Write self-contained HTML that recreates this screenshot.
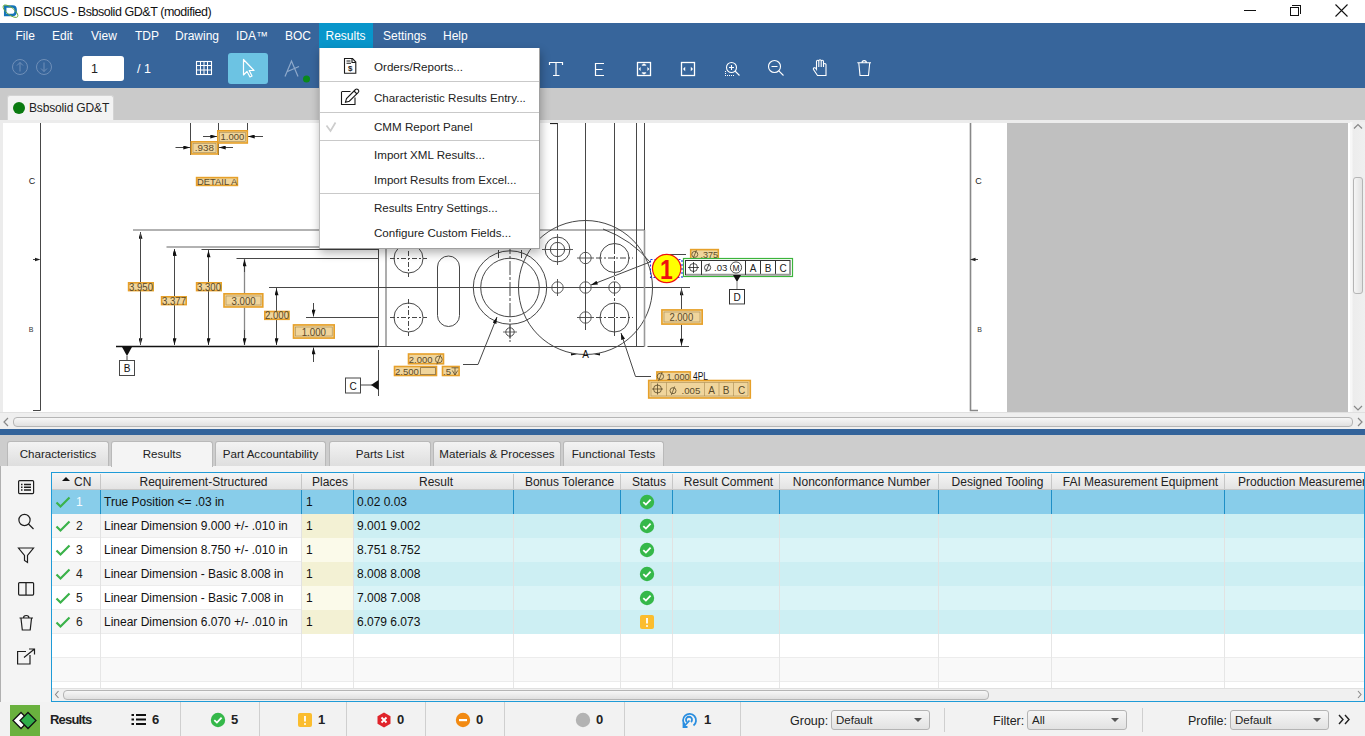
<!DOCTYPE html>
<html><head><meta charset="utf-8">
<style>
*{margin:0;padding:0;box-sizing:border-box}
html,body{width:1365px;height:736px;overflow:hidden;background:#fff;font-family:"Liberation Sans",sans-serif;color:#000}
.a{position:absolute}
.t{position:absolute;white-space:nowrap;line-height:1}
.mi{position:absolute;top:30px;color:#fff;font-size:12px;white-space:nowrap;line-height:1}
.tab{position:absolute;top:441px;height:25px;border:1px solid #b9b9b9;border-bottom:none;border-radius:3px 3px 0 0;background:linear-gradient(#f3f3f3,#dedede);font-size:11.6px;color:#222;text-align:center;line-height:24px;white-space:nowrap}
.row{position:absolute;left:52px;width:1313px;height:24px}
.c{position:absolute;top:0;height:24px;font-size:12px;line-height:24px;white-space:nowrap;color:#111}
.hd{position:absolute;top:474px;height:16px;font-size:12px;line-height:16px;text-align:center;color:#222;white-space:nowrap;border-right:1px solid #c6c6c6;padding-left:5px}
.sep{position:absolute;top:702px;width:1px;height:34px;background:#cfcfcf}
.sn{position:absolute;top:712px;font-size:13px;font-weight:bold;color:#222;line-height:1}
.dd{position:absolute;top:710px;height:19.5px;border:1px solid #b4b4b4;border-radius:3px;background:linear-gradient(#f6f6f6,#e2e2e2);font-size:11.5px;line-height:18px;padding-left:4px;color:#222}
.dd:after{content:"";position:absolute;right:7px;top:7px;border-left:4px solid transparent;border-right:4px solid transparent;border-top:4px solid #555}
.ml{position:absolute;left:374px;font-size:11.6px;color:#222;white-space:nowrap;line-height:1}
.msep{position:absolute;left:320px;width:219px;height:1px;background:#c9c9c9}
</style></head><body>

<!-- TITLE BAR -->
<svg class="a" style="left:0;top:0" width="22" height="22" viewBox="0 0 22 22">
<path d="M5.2 6.5H12.5Q15.6 6.5 15.6 9.6V12Q15.6 14.9 12.5 14.9H5.2Z" fill="none" stroke="#1474b8" stroke-width="2.5"/>
<ellipse cx="10.5" cy="11.2" rx="9" ry="3.6" transform="rotate(38 10.5 11.2)" fill="none" stroke="#6aa83a" stroke-width="0.9"/>
</svg>
<div class="t" style="left:23.5px;top:6px;font-size:12.5px;color:#111;letter-spacing:-0.45px">DISCUS - Bsbsolid GD&amp;T (modified)</div>
<div class="a" style="left:1244px;top:10px;width:12px;height:1px;background:#111"></div>
<div class="a" style="left:1290px;top:7px;width:9px;height:9px;border:1px solid #111"></div>
<div class="a" style="left:1292px;top:5px;width:9px;height:9px;border-top:1px solid #111;border-right:1px solid #111"></div>
<svg class="a" style="left:1335px;top:4px" width="13" height="13" viewBox="0 0 13 13"><path d="M0.5 0.5L12.5 12.5M12.5 0.5L0.5 12.5" stroke="#111" stroke-width="1.1"/></svg>

<!-- MENU + TOOLBAR -->
<div class="a" style="left:0;top:23px;width:1365px;height:65px;background:#37659b"></div>
<div class="a" style="left:319px;top:23px;width:54px;height:25px;background:#0896cb"></div>
<div class="mi" style="left:15.5px">File</div>
<div class="mi" style="left:52px">Edit</div>
<div class="mi" style="left:91px">View</div>
<div class="mi" style="left:135px">TDP</div>
<div class="mi" style="left:175px">Drawing</div>
<div class="mi" style="left:236px">IDA™</div>
<div class="mi" style="left:285px">BOC</div>
<div class="mi" style="left:325.5px">Results</div>
<div class="mi" style="left:383px">Settings</div>
<div class="mi" style="left:443px">Help</div>

<svg class="a" style="left:0;top:48px" width="1365" height="40" viewBox="0 48 1365 40">
<g fill="none" stroke="#6f8fb8" stroke-width="1">
<circle cx="20" cy="67" r="7.5"/><path d="M20 71.5V62.5M17 65.5L20 62.5L23 65.5"/>
<circle cx="44" cy="67" r="7.5"/><path d="M44 62.5V71.5M41 68.5L44 71.5L47 68.5"/>
</g>
<rect x="82" y="56" width="42" height="25" rx="3" fill="#fff"/>
<text x="91" y="72.6" font-size="12.5" fill="#222" font-family="Liberation Sans">1</text>
<text x="137" y="72.6" font-size="12.5" fill="#fff" font-family="Liberation Sans">/ 1</text>
<g fill="none" stroke="#fff" stroke-width="1.3">
<rect x="196.5" y="61.5" width="15" height="13" stroke-width="1.1"/><path d="M196.5 65.5H211.5M196.5 70H211.5M200.5 61.5V74.5M204 61.5V74.5M207.5 61.5V74.5" stroke-width="1"/>
</g>
<rect x="228" y="53" width="40" height="31" rx="3" fill="#6cc3e3"/>
<path d="M243.5 59.5L243.5 75L247 71.5L250 77L252 76L249.2 70.5L254 70.5Z" fill="#6cc3e3" stroke="#fff" stroke-width="1.2" stroke-linejoin="round"/>
<path d="M285 76.5L291.5 61L298 76.5M287.5 71.5L299 66.5" fill="none" stroke="#8ea9cb" stroke-width="1.2"/>
<circle cx="306.5" cy="79" r="3.5" fill="#0a8a1a"/>
<g fill="none" stroke="#fff" stroke-width="1.3">
<path d="M549.5 65V62.5H562.5V65M556 62.5V75.5M553 75.5H559.5" stroke-width="1.2"/>
<path d="M604 63.5H595.5V75.5H604M595.5 69.5H602.5" stroke-width="1.2"/>
<rect x="637.5" y="62.5" width="13" height="13"/>
<rect x="681.5" y="62.5" width="13" height="13"/>
<circle cx="731.5" cy="67.5" r="5" stroke-width="1.1"/><path d="M735 71L739.5 75.5M729 67.5H734M731.5 65V70" stroke-width="1.1"/>
<path d="M725 75.5H735M725.5 71V75" stroke-dasharray="1 1" stroke-width="1"/>
<circle cx="774.5" cy="66.5" r="6" stroke-width="1.1"/><path d="M778.8 70.8L783.5 75.5M771.5 66.5H777.5" stroke-width="1.1"/>
<path d="M817.5 75.5L813.5 69.5Q813 68.2 814.2 67.8Q815.2 67.5 816 68.5L816.5 69.3V61.5Q816.5 60.3 817.7 60.3Q818.8 60.3 818.8 61.5V67V60.8Q818.8 59.8 820 59.8Q821.2 59.8 821.2 60.8V67V61.5Q821.2 60.3 822.3 60.3Q823.5 60.3 823.5 61.5V67V64.5Q823.5 63.5 824.8 63.5Q826 63.5 826 64.5V75.5Z" stroke-width="1.1"/>
<path d="M857.3 62.8H871M858.8 63L860 75.5H868.5L869.7 63M862 62.8Q862 60.6 864.2 60.6Q866.4 60.6 866.4 62.8" stroke-width="1.1"/>
</g>
<g fill="#fff">
<path d="M644 63.2L642 65.2H646ZM644 74.8L642 72.8H646ZM638.6 69L640.6 67V71ZM649.4 69L647.4 67V71Z"/><rect x="641.8" y="64.6" width="4.4" height="1"/><rect x="641.8" y="72.4" width="4.4" height="1"/>
<path d="M683 69L685.2 66.8V71.2ZM693 69L690.8 66.8V71.2Z"/>
</g>
</svg>

<!-- DOC TAB STRIP -->
<div class="a" style="left:0;top:88px;width:1365px;height:32px;background:#cacaca"></div>
<div class="a" style="left:6.5px;top:94.5px;width:107.5px;height:26px;background:#f3f3f3;border:1px solid #d4d4d4;border-bottom:none;border-radius:3px 3px 0 0"></div>
<div class="a" style="left:13px;top:101.5px;width:12px;height:12px;border-radius:50%;background:#0a7a10"></div>
<div class="t" style="left:29px;top:102px;font-size:12px;color:#222;letter-spacing:-0.15px">Bsbsolid GD&amp;T</div>
<div class="a" style="left:0;top:120px;width:1365px;height:3px;background:#ececec"></div>

<!-- DRAWING AREA -->
<div class="a" style="left:0;top:123px;width:1350px;height:289px;background:#fff;border-left:3px solid #ececec"></div>
<div class="a" style="left:1007px;top:123px;width:341px;height:289px;background:#c0c0c0"></div>
<svg class="a" style="left:3px;top:123px" width="1004" height="289" viewBox="3 123 1004 289" font-family="Liberation Sans">
<defs>
<marker id="ar" viewBox="0 0 10 6" refX="10" refY="3" markerWidth="9" markerHeight="4" orient="auto-start-reverse" markerUnits="userSpaceOnUse"><path d="M0 0L10 3L0 6Z" fill="#111"/></marker>
</defs>
<g stroke="#474747" stroke-width="1" fill="none">
<!-- frame -->
<path d="M40.5 122V410.5H33"/><path d="M33 259.5H36"/><path d="M35 257.8L40.5 259.5L35 261.2Z" fill="#222" stroke="none"/>
<path d="M970.5 122V410.5H978" stroke="#888" stroke-width="1.6"/><path d="M974 259.5H978"/><path d="M975.5 257.8L970 259.5L975.5 261.2Z" fill="#222" stroke="none"/>
<!-- detail A dims -->
<path d="M190.5 122V155M218.5 122V155M247.5 122V131"/>
<path d="M203 136.5H217" marker-end="url(#ar)"/><path d="M263 136.5H248" marker-end="url(#ar)"/>
<path d="M175.5 147.5H190" marker-end="url(#ar)"/><path d="M233 147.5H219" marker-end="url(#ar)"/>
<!-- ext lines -->
<path d="M133 230H644.5M166.5 247H380" stroke="#999" stroke-width="1.6"/>
<path d="M201.5 249.5H378M236.5 258.5H378M269 287.5H378M306 317.5H378"/>
<path d="M116 346.5H378" stroke="#111" stroke-width="1.4"/>
<!-- vertical dims -->
<path d="M140.5 245V232" marker-end="url(#ar)"/><path d="M140.5 330V345" marker-end="url(#ar)"/>
<path d="M140.5 232V282M140.5 291V345"/>
<path d="M174.5 250V249" marker-end="url(#ar)"/><path d="M174.5 249V296M174.5 305V345"/><path d="M174.5 330V345" marker-end="url(#ar)"/><path d="M174.5 262V249" marker-end="url(#ar)"/>
<path d="M208.5 249.5V282M208.5 291V345"/><path d="M208.5 262V250.5" marker-end="url(#ar)"/><path d="M208.5 330V345" marker-end="url(#ar)"/>
<path d="M244.5 259V293M244.5 307.5V345" stroke="#888" stroke-width="1.3"/><path d="M244.5 272V259.5" marker-end="url(#ar)"/><path d="M244.5 330V345" marker-end="url(#ar)"/>
<path d="M276.5 288V311M276.5 319.5V345"/><path d="M276.5 300V288.5" marker-end="url(#ar)"/><path d="M276.5 330V345" marker-end="url(#ar)"/>
<path d="M313.5 303V316.5" marker-end="url(#ar)"/><path d="M313.5 362V347.5" marker-end="url(#ar)"/>
<!-- datum B -->
<path d="M127 356V360"/>
<rect x="119.5" y="360.5" width="15" height="15"/>
<!-- datum C -->
<path d="M378.5 350V396M361 385H372"/>
<rect x="345.5" y="378" width="15" height="15"/>
<!-- left part of part -->
<path d="M378.5 249V346.5"/>
<path d="M386 249V346.5" stroke="#999" stroke-width="1.6"/>
<path d="M370 287.5H690"/>
<path d="M378 346.5H644.5"/>
<circle cx="408.5" cy="258.5" r="14.5"/><circle cx="408.5" cy="317.5" r="14.5"/>
<path d="M390 258.5H427M408.5 240V277M390 317.5H427M408.5 299V336" stroke-dasharray="5 2 2 2"/>
<rect x="437.5" y="256" width="22" height="70.5" rx="11"/>
<circle cx="510" cy="287.5" r="36.7"/><circle cx="510" cy="287.5" r="29.3"/>
<path d="M510 240V342" stroke="#444" stroke-dasharray="14 2 3 2"/>
<circle cx="510" cy="332" r="4.2"/><path d="M503 332H517M510 325V339" stroke-width="0.8"/>
<path d="M498.5 250V258M521.5 250V258"/>
<circle cx="585.5" cy="287.5" r="67"/>
<path d="M557.5 122V230M585.5 122V330M614.5 122V240M636.5 122V346.5M644.5 122V230" />
<path d="M614.5 122V240M614.5 240V336" stroke-dasharray="14 2 3 2"/>
<path d="M644.5 230V346.5" stroke="#999" stroke-width="1.6"/>
<circle cx="557.5" cy="249.5" r="12.4"/><circle cx="557.5" cy="249.5" r="7.1"/>
<path d="M542 249.5H573M557.5 234V265" stroke-width="0.9"/>
<g stroke-width="0.9">
<circle cx="585.5" cy="258" r="5.7"/><circle cx="585.5" cy="287.5" r="5.7"/><circle cx="585.5" cy="317.5" r="5.7"/>
<circle cx="557.5" cy="287.5" r="5.7"/><circle cx="614.5" cy="287.5" r="5.7"/>
<path d="M577 258H594M577 317.5H594M549 287.5H566M606 287.5H623M557.5 279V296M585.5 309V326"/>
</g>
<circle cx="614.5" cy="258" r="14.5"/><circle cx="614.5" cy="317.5" r="14.5"/>
<path d="M596 258H633M596 317.5H633M614.5 310V336" stroke-dasharray="6 2 2 2"/>
<!-- 2.000 right dim -->
<path d="M647.5 346.5H689"/>
<path d="M681.5 300V288.5" marker-end="url(#ar)"/><path d="M681.5 288.5V309.5M681.5 324.5V345.5"/><path d="M681.5 333V345.5" marker-end="url(#ar)"/>
<!-- A arcs -->
<path d="M571 353.2L577 354.3L571 355.4Z" fill="#111" stroke="none"/><path d="M600 353.2L594 354.3L600 355.4Z" fill="#111" stroke="none"/>
<!-- leaders -->
<path d="M463 364.5H478L497 317" marker-end="url(#ar)"/>
<path d="M651 376.5H635.5L621 333" marker-end="url(#ar)"/>
<path d="M650 262L591 285" marker-end="url(#ar)"/>
<path d="M670 254.5H686"/>
</g>
<text x="585.5" y="358" font-size="10" fill="#111" text-anchor="middle">A</text>
<text x="32" y="184" font-size="9" fill="#222" text-anchor="middle">C</text>
<text x="31" y="331.5" font-size="7" fill="#333" text-anchor="middle">B</text>
<text x="978.5" y="184" font-size="9" fill="#222" text-anchor="middle">C</text>
<text x="979.5" y="331.5" font-size="7" fill="#333" text-anchor="middle">B</text>
<path d="M122 347H132L127 356Z" fill="#111"/>
<text x="127" y="372" font-size="10" fill="#111" text-anchor="middle">B</text>
<path d="M371 385L378.5 380V390Z" fill="#111"/>
<text x="353" y="389.5" font-size="10" fill="#111" text-anchor="middle">C</text>
<!-- orange labels -->
<g font-size="10" fill="#5a4a2a">
<g stroke="#e6a02a" stroke-width="1.6" fill="#f0d59c">
<rect x="217.8" y="130.8" width="29.5" height="12.2"/>
<rect x="191.3" y="141.8" width="26.5" height="12.2"/>
<rect x="196.6" y="177.6" width="40.8" height="7.8"/>
<rect x="128.6" y="282.8" width="24.6" height="7.8"/>
<rect x="161.6" y="296.8" width="24.6" height="7.8"/>
<rect x="196.6" y="282.8" width="24.6" height="7.8"/>
<rect x="224" y="293.8" width="38.8" height="13.2"/>
<rect x="264.8" y="311.5" width="24.2" height="7.8"/>
<rect x="293.5" y="324.9" width="40.7" height="13.2"/>
<rect x="661.9" y="309.9" width="40.3" height="14.2"/>
<rect x="408.5" y="354" width="35" height="9.8"/>
<rect x="394.5" y="366.5" width="42" height="9"/>
<rect x="442.5" y="366.5" width="16.6" height="9"/>
<rect x="690.7" y="249.6" width="27.6" height="10.4"/>
<rect x="656.9" y="371.9" width="33.4" height="10.1"/>
<rect x="648.7" y="380.5" width="101.6" height="17.5"/>
</g>
<g stroke="#a88a50" stroke-width="0.6" fill="none">
<rect x="219.5" y="132.5" width="26" height="9"/>
<rect x="193" y="143.5" width="23" height="9"/>
<rect x="226" y="296" width="35" height="9"/>
<rect x="295.5" y="327" width="36.7" height="9"/>
<rect x="664" y="312" width="36" height="10"/>
<rect x="651" y="382.5" width="97" height="13.5"/>
<path d="M666.5 382.5V396M704.5 382.5V396M719 382.5V396M733.5 382.5V396"/>
</g>
<text x="220.5" y="139.6" font-size="9" textLength="23.7" lengthAdjust="spacingAndGlyphs">1.000</text>
<text x="194.8" y="151.3" font-size="9" textLength="19.2" lengthAdjust="spacingAndGlyphs">.938</text>
<text x="197" y="185.1" font-size="9" textLength="40.2" lengthAdjust="spacingAndGlyphs">DETAIL A</text>
<text x="129" y="290.6" font-size="11" textLength="24" lengthAdjust="spacingAndGlyphs">3.950</text>
<text x="162" y="304.6" font-size="11" textLength="24" lengthAdjust="spacingAndGlyphs">3.377</text>
<text x="197" y="290.6" font-size="11" textLength="24" lengthAdjust="spacingAndGlyphs">3.300</text>
<text x="231.5" y="304.5" font-size="10.5" textLength="24.2" lengthAdjust="spacingAndGlyphs">3.000</text>
<text x="265" y="319.4" font-size="11" textLength="24" lengthAdjust="spacingAndGlyphs">2.000</text>
<text x="301.7" y="335.6" font-size="10.5" textLength="24.3" lengthAdjust="spacingAndGlyphs">1.000</text>
<text x="669.4" y="321.3" font-size="10" textLength="23.8" lengthAdjust="spacingAndGlyphs">2.000</text>
<text x="408.8" y="363.2" font-size="9.5" textLength="23.7" lengthAdjust="spacingAndGlyphs">2.000</text><g fill="none" stroke="#5a4a2a" stroke-width="0.8"><circle cx="438.8" cy="359.5" r="3.4"/><path d="M436.9 364.3L440.7 354.7"/></g>
<text x="395" y="375" font-size="9.5" textLength="23.9" lengthAdjust="spacingAndGlyphs">2.500</text>
<text x="443" y="375" font-size="9.5" textLength="8" lengthAdjust="spacingAndGlyphs">.5</text><path d="M451.5 367.8H458.5M455 367.8V375M452.3 370.5L455 375L457.7 370.5" fill="none" stroke="#5a4a2a" stroke-width="0.8"/><rect x="420.6" y="367.6" width="14.8" height="7" fill="none" stroke="#8a7045" stroke-width="0.8"/>
<g fill="none" stroke="#5a4a2a" stroke-width="0.8"><circle cx="694.8" cy="254.4" r="3.0"/><path d="M693.1 258.6L696.4 250.2"/></g><text x="700.4" y="257.7" font-size="9" textLength="17.6" lengthAdjust="spacingAndGlyphs">.375</text>
<g fill="none" stroke="#5a4a2a" stroke-width="0.8"><circle cx="660.4" cy="376.4" r="3.2"/><path d="M658.6 380.9L662.2 371.9"/></g><text x="666.6" y="379.9" font-size="9.5" textLength="23.1" lengthAdjust="spacingAndGlyphs">1.000</text>
<g fill="none" stroke="#5a4a2a" stroke-width="0.8"><circle cx="673.0" cy="390.7" r="3.0"/><path d="M671.4 394.9L674.6 386.5"/></g>
<text x="681.5" y="394.1" font-size="9.5" textLength="18.8" lengthAdjust="spacingAndGlyphs">.005</text>
<text x="711.5" y="394" font-size="10" text-anchor="middle">A</text>
<text x="726" y="394" font-size="10" text-anchor="middle">B</text>
<text x="741.5" y="394" font-size="10" text-anchor="middle">C</text>
<g stroke="#5a4a2a" stroke-width="0.8" fill="none"><circle cx="657.5" cy="389" r="4"/><path d="M652 389H663M657.5 383.5V394.5"/></g>
</g>
<text x="693" y="380" font-size="10" fill="#111" textLength="15" lengthAdjust="spacingAndGlyphs">4PL</text>
<!-- FCF green -->
<rect x="683.5" y="258.5" width="109" height="18" fill="#fff" stroke="#3cb43c" stroke-width="1.2"/>
<rect x="685.5" y="260.5" width="104.5" height="14.3" fill="#fff" stroke="#333" stroke-width="1"/>
<path d="M701.5 260.5V274.8M745.5 260.5V274.8M760.5 260.5V274.8M775.5 260.5V274.8" stroke="#333" stroke-width="1"/>
<path d="M686 274.5H701M702 274.5H745M746 274.5H790" stroke="#999" stroke-width="1.3"/>
<g stroke="#222" stroke-width="0.8" fill="none"><circle cx="693.5" cy="267.5" r="4"/><path d="M688 267.5H699M693.5 262V273"/><circle cx="736" cy="267.5" r="5.6"/></g>
<g fill="none" stroke="#222" stroke-width="0.8"><circle cx="707.6" cy="267.6" r="3.1"/><path d="M705.9 271.9L709.3 263.3"/></g>
<text x="714" y="270.8" font-size="8.5" fill="#222" textLength="13.3" lengthAdjust="spacingAndGlyphs">.03</text>
<text x="736" y="271.3" font-size="8.5" fill="#222" text-anchor="middle">M</text>
<text x="753" y="271.5" font-size="10" fill="#222" text-anchor="middle">A</text>
<text x="768" y="271.5" font-size="10" fill="#222" text-anchor="middle">B</text>
<text x="783" y="271.5" font-size="10" fill="#222" text-anchor="middle">C</text>
<path d="M733 275H741L737 282Z" fill="#111"/>
<path d="M737 282V289" stroke="#999" stroke-width="1.2"/>
<rect x="729.5" y="289.5" width="15" height="14.5" fill="#fff" stroke="#333" stroke-width="1"/>
<path d="M730 304.5H745" stroke="#aaa" stroke-width="1"/>
<text x="737" y="300.5" font-size="10" fill="#111" text-anchor="middle">D</text>
<!-- balloon -->
<rect x="650.5" y="259.5" width="31.5" height="18" fill="none" stroke="#1030e0" stroke-width="1.1" stroke-dasharray="2 2"/>
<circle cx="666.7" cy="268.5" r="14.2" fill="#ffff00" stroke="#ee1010" stroke-width="1.2"/>
<text x="0" y="0" font-size="27" font-weight="bold" fill="#ee1010" text-anchor="middle" transform="translate(666.5 278.6) scale(0.85 1)">1</text>
<path d="M550 123.5H557.5" stroke="#222" stroke-width="1.2" fill="none"/><path d="M603 229Q632 240 650 262" stroke="#333" stroke-width="0.9" fill="none"/>
</svg>


<!-- vertical scrollbar -->
<div class="a" style="left:1350px;top:122px;width:15px;height:290px;background:linear-gradient(90deg,#f7f7f7 0,#f7f7f7 2px,#ececec 3px,#f0f0f0)"></div>
<div class="a" style="left:1353px;top:177px;width:10px;height:117px;border:1px solid #b5b5b5;border-radius:3px;background:linear-gradient(90deg,#f5f5f5,#e2e2e2)"></div>
<svg class="a" style="left:1352px;top:122px" width="12" height="290"><path d="M2 6.5L6 2.5L10 6.5M2 284L6 288L10 284" fill="none" stroke="#888" stroke-width="1.2"/></svg>
<!-- horizontal scrollbar -->
<div class="a" style="left:0;top:412px;width:1365px;height:17px;background:#efefef;border-top:1px solid #e0e0e0"></div>
<div class="a" style="left:13px;top:417px;width:1340px;height:10px;border:1px solid #b5b5b5;border-radius:4px;background:linear-gradient(#f7f7f7,#e0e0e0)"></div>
<svg class="a" style="left:0;top:412px" width="1365" height="17"><path d="M8 6L4 10L8 14M1358 6L1362 10L1358 14" fill="none" stroke="#888" stroke-width="1.2"/></svg>
<div class="a" style="left:0;top:429px;width:1365px;height:6px;background:#33639a"></div>

<!-- BOTTOM TABS -->
<div class="a" style="left:0;top:435px;width:1365px;height:31px;background:#cdcdcd"></div>
<div class="a" style="left:0;top:466px;width:1365px;height:236px;background:#f4f4f4;border-left:1px solid #b0b0b0"></div>
<div class="tab" style="left:7px;width:102px">Characteristics</div>
<div class="tab" style="left:111px;width:102px;background:#f4f4f4;height:26px">Results</div>
<div class="tab" style="left:215px;width:111px">Part Accountability</div>
<div class="tab" style="left:329px;width:102px">Parts List</div>
<div class="tab" style="left:433px;width:128px">Materials &amp; Processes</div>
<div class="tab" style="left:563px;width:101px">Functional Tests</div>

<svg class="a" style="left:0;top:466px" width="51" height="236" viewBox="0 466 51 236">
<g fill="none" stroke="#1e1e1e" stroke-width="1.2">
<rect x="18.6" y="480.6" width="15" height="13" rx="1"/>
<path d="M24 484.5H31M24 487.3H31M24 490H31" stroke-width="1.6"/>
<path d="M21 484.5H22.5M21 487.3H22.5M21 490H22.5" stroke-width="1.6"/>
<circle cx="24.5" cy="520" r="5.6"/><path d="M28.5 524L33.5 529"/>
<path d="M18.5 548H33.5L27.5 555.5V562.5L24.5 560.5V555.5Z"/>
<rect x="18.6" y="582.6" width="15" height="12.5" rx="1"/><path d="M26 582.6V595.1"/>
<path d="M19.5 618H33M21 618.5L22.3 630H30.2L31.5 618.5M23.5 618Q23.5 615.5 26.2 615.5Q29 615.5 29 618"/>
<path d="M30 655V664H17.6V651.5H26M24 657.5L34.5 649M29 649H34.5V654.5"/>
</g>
</svg>

<div class="a" style="left:51px;top:472px;width:1314px;height:230px;border:1px solid #1f9bd7;border-right:none;background:#fff"></div>
<div class="a" style="left:52px;top:473px;width:1313px;height:17px;background:linear-gradient(#f5f5f5,#e3e3e3);border-bottom:1px solid #c8c8c8"></div>
<div class="hd" style="left:52px;width:49px;text-align:left;padding-left:22px">CN</div>
<div class="hd" style="left:101px;width:201px">Requirement-Structured</div>
<div class="hd" style="left:302px;width:52px">Places</div>
<div class="hd" style="left:354px;width:160px">Result</div>
<div class="hd" style="left:514px;width:107px">Bonus Tolerance</div>
<div class="hd" style="left:621px;width:52px">Status</div>
<div class="hd" style="left:673px;width:107px">Result Comment</div>
<div class="hd" style="left:780px;width:159px">Nonconformance Number</div>
<div class="hd" style="left:939px;width:113px">Designed Tooling</div>
<div class="hd" style="left:1052px;width:173px">FAI Measurement Equipment</div>
<div class="hd" style="left:1225px;width:201px;text-align:left;padding-left:13px;border-right:none">Production Measurement Equipment</div>
<div class="a" style="left:62px;top:477px;width:0;height:0;border-left:4px solid transparent;border-right:4px solid transparent;border-bottom:4px solid #111"></div>
<div class="a" style="left:52px;top:490px;width:1313px;height:24px;background:#88cdea"></div>
<div class="a" style="left:100px;top:490px;width:1px;height:24px;background:#1f8fc6"></div>
<div class="a" style="left:301px;top:490px;width:1px;height:24px;background:#1f8fc6"></div>
<div class="a" style="left:353px;top:490px;width:1px;height:24px;background:#1f8fc6"></div>
<div class="a" style="left:513px;top:490px;width:1px;height:24px;background:#1f8fc6"></div>
<div class="a" style="left:620px;top:490px;width:1px;height:24px;background:#1f8fc6"></div>
<div class="a" style="left:672px;top:490px;width:1px;height:24px;background:#1f8fc6"></div>
<div class="a" style="left:779px;top:490px;width:1px;height:24px;background:#1f8fc6"></div>
<div class="a" style="left:938px;top:490px;width:1px;height:24px;background:#1f8fc6"></div>
<div class="a" style="left:1051px;top:490px;width:1px;height:24px;background:#1f8fc6"></div>
<div class="a" style="left:1224px;top:490px;width:1px;height:24px;background:#1f8fc6"></div>
<div class="a" style="left:52px;top:514px;width:250px;height:24px;background:#f6f6f6;border-bottom:1px solid #ececec"></div>
<div class="a" style="left:302px;top:514px;width:52px;height:24px;background:#f3f1d4"></div>
<div class="a" style="left:354px;top:514px;width:1011px;height:24px;background:#cdeff3"></div>
<div class="a" style="left:100px;top:514px;width:1px;height:24px;background:#e2e2e2"></div>
<div class="a" style="left:301px;top:514px;width:1px;height:24px;background:#e2e2e2"></div>
<div class="a" style="left:353px;top:514px;width:1px;height:24px;background:#e2e2e2"></div>
<div class="a" style="left:513px;top:514px;width:1px;height:24px;background:#e2e2e2"></div>
<div class="a" style="left:620px;top:514px;width:1px;height:24px;background:#e2e2e2"></div>
<div class="a" style="left:672px;top:514px;width:1px;height:24px;background:#e2e2e2"></div>
<div class="a" style="left:779px;top:514px;width:1px;height:24px;background:#e2e2e2"></div>
<div class="a" style="left:938px;top:514px;width:1px;height:24px;background:#e2e2e2"></div>
<div class="a" style="left:1051px;top:514px;width:1px;height:24px;background:#e2e2e2"></div>
<div class="a" style="left:1224px;top:514px;width:1px;height:24px;background:#e2e2e2"></div>
<div class="a" style="left:52px;top:538px;width:250px;height:24px;background:#ffffff;border-bottom:1px solid #ececec"></div>
<div class="a" style="left:302px;top:538px;width:52px;height:24px;background:#fbfaea"></div>
<div class="a" style="left:354px;top:538px;width:1011px;height:24px;background:#daf4f7"></div>
<div class="a" style="left:100px;top:538px;width:1px;height:24px;background:#e2e2e2"></div>
<div class="a" style="left:301px;top:538px;width:1px;height:24px;background:#e2e2e2"></div>
<div class="a" style="left:353px;top:538px;width:1px;height:24px;background:#e2e2e2"></div>
<div class="a" style="left:513px;top:538px;width:1px;height:24px;background:#e2e2e2"></div>
<div class="a" style="left:620px;top:538px;width:1px;height:24px;background:#e2e2e2"></div>
<div class="a" style="left:672px;top:538px;width:1px;height:24px;background:#e2e2e2"></div>
<div class="a" style="left:779px;top:538px;width:1px;height:24px;background:#e2e2e2"></div>
<div class="a" style="left:938px;top:538px;width:1px;height:24px;background:#e2e2e2"></div>
<div class="a" style="left:1051px;top:538px;width:1px;height:24px;background:#e2e2e2"></div>
<div class="a" style="left:1224px;top:538px;width:1px;height:24px;background:#e2e2e2"></div>
<div class="a" style="left:52px;top:562px;width:250px;height:24px;background:#f6f6f6;border-bottom:1px solid #ececec"></div>
<div class="a" style="left:302px;top:562px;width:52px;height:24px;background:#f3f1d4"></div>
<div class="a" style="left:354px;top:562px;width:1011px;height:24px;background:#cdeff3"></div>
<div class="a" style="left:100px;top:562px;width:1px;height:24px;background:#e2e2e2"></div>
<div class="a" style="left:301px;top:562px;width:1px;height:24px;background:#e2e2e2"></div>
<div class="a" style="left:353px;top:562px;width:1px;height:24px;background:#e2e2e2"></div>
<div class="a" style="left:513px;top:562px;width:1px;height:24px;background:#e2e2e2"></div>
<div class="a" style="left:620px;top:562px;width:1px;height:24px;background:#e2e2e2"></div>
<div class="a" style="left:672px;top:562px;width:1px;height:24px;background:#e2e2e2"></div>
<div class="a" style="left:779px;top:562px;width:1px;height:24px;background:#e2e2e2"></div>
<div class="a" style="left:938px;top:562px;width:1px;height:24px;background:#e2e2e2"></div>
<div class="a" style="left:1051px;top:562px;width:1px;height:24px;background:#e2e2e2"></div>
<div class="a" style="left:1224px;top:562px;width:1px;height:24px;background:#e2e2e2"></div>
<div class="a" style="left:52px;top:586px;width:250px;height:24px;background:#ffffff;border-bottom:1px solid #ececec"></div>
<div class="a" style="left:302px;top:586px;width:52px;height:24px;background:#fbfaea"></div>
<div class="a" style="left:354px;top:586px;width:1011px;height:24px;background:#daf4f7"></div>
<div class="a" style="left:100px;top:586px;width:1px;height:24px;background:#e2e2e2"></div>
<div class="a" style="left:301px;top:586px;width:1px;height:24px;background:#e2e2e2"></div>
<div class="a" style="left:353px;top:586px;width:1px;height:24px;background:#e2e2e2"></div>
<div class="a" style="left:513px;top:586px;width:1px;height:24px;background:#e2e2e2"></div>
<div class="a" style="left:620px;top:586px;width:1px;height:24px;background:#e2e2e2"></div>
<div class="a" style="left:672px;top:586px;width:1px;height:24px;background:#e2e2e2"></div>
<div class="a" style="left:779px;top:586px;width:1px;height:24px;background:#e2e2e2"></div>
<div class="a" style="left:938px;top:586px;width:1px;height:24px;background:#e2e2e2"></div>
<div class="a" style="left:1051px;top:586px;width:1px;height:24px;background:#e2e2e2"></div>
<div class="a" style="left:1224px;top:586px;width:1px;height:24px;background:#e2e2e2"></div>
<div class="a" style="left:52px;top:610px;width:250px;height:24px;background:#f6f6f6;border-bottom:1px solid #ececec"></div>
<div class="a" style="left:302px;top:610px;width:52px;height:24px;background:#f3f1d4"></div>
<div class="a" style="left:354px;top:610px;width:1011px;height:24px;background:#cdeff3"></div>
<div class="a" style="left:100px;top:610px;width:1px;height:24px;background:#e2e2e2"></div>
<div class="a" style="left:301px;top:610px;width:1px;height:24px;background:#e2e2e2"></div>
<div class="a" style="left:353px;top:610px;width:1px;height:24px;background:#e2e2e2"></div>
<div class="a" style="left:513px;top:610px;width:1px;height:24px;background:#e2e2e2"></div>
<div class="a" style="left:620px;top:610px;width:1px;height:24px;background:#e2e2e2"></div>
<div class="a" style="left:672px;top:610px;width:1px;height:24px;background:#e2e2e2"></div>
<div class="a" style="left:779px;top:610px;width:1px;height:24px;background:#e2e2e2"></div>
<div class="a" style="left:938px;top:610px;width:1px;height:24px;background:#e2e2e2"></div>
<div class="a" style="left:1051px;top:610px;width:1px;height:24px;background:#e2e2e2"></div>
<div class="a" style="left:1224px;top:610px;width:1px;height:24px;background:#e2e2e2"></div>
<div class="a" style="left:52px;top:634px;width:1313px;height:24px;background:#ffffff;border-bottom:1px solid #ececec"></div>
<div class="a" style="left:100px;top:634px;width:1px;height:24px;background:#e6e6e6"></div>
<div class="a" style="left:301px;top:634px;width:1px;height:24px;background:#e6e6e6"></div>
<div class="a" style="left:353px;top:634px;width:1px;height:24px;background:#e6e6e6"></div>
<div class="a" style="left:513px;top:634px;width:1px;height:24px;background:#e6e6e6"></div>
<div class="a" style="left:620px;top:634px;width:1px;height:24px;background:#e6e6e6"></div>
<div class="a" style="left:672px;top:634px;width:1px;height:24px;background:#e6e6e6"></div>
<div class="a" style="left:779px;top:634px;width:1px;height:24px;background:#e6e6e6"></div>
<div class="a" style="left:938px;top:634px;width:1px;height:24px;background:#e6e6e6"></div>
<div class="a" style="left:1051px;top:634px;width:1px;height:24px;background:#e6e6e6"></div>
<div class="a" style="left:1224px;top:634px;width:1px;height:24px;background:#e6e6e6"></div>
<div class="a" style="left:52px;top:658px;width:1313px;height:24px;background:#f9f9f9;border-bottom:1px solid #ececec"></div>
<div class="a" style="left:100px;top:658px;width:1px;height:24px;background:#e6e6e6"></div>
<div class="a" style="left:301px;top:658px;width:1px;height:24px;background:#e6e6e6"></div>
<div class="a" style="left:353px;top:658px;width:1px;height:24px;background:#e6e6e6"></div>
<div class="a" style="left:513px;top:658px;width:1px;height:24px;background:#e6e6e6"></div>
<div class="a" style="left:620px;top:658px;width:1px;height:24px;background:#e6e6e6"></div>
<div class="a" style="left:672px;top:658px;width:1px;height:24px;background:#e6e6e6"></div>
<div class="a" style="left:779px;top:658px;width:1px;height:24px;background:#e6e6e6"></div>
<div class="a" style="left:938px;top:658px;width:1px;height:24px;background:#e6e6e6"></div>
<div class="a" style="left:1051px;top:658px;width:1px;height:24px;background:#e6e6e6"></div>
<div class="a" style="left:1224px;top:658px;width:1px;height:24px;background:#e6e6e6"></div>
<div class="a" style="left:52px;top:682px;width:1313px;height:6px;background:#fff"></div>
<div class="a" style="left:100px;top:682px;width:1px;height:6px;background:#e6e6e6"></div>
<div class="a" style="left:301px;top:682px;width:1px;height:6px;background:#e6e6e6"></div>
<div class="a" style="left:353px;top:682px;width:1px;height:6px;background:#e6e6e6"></div>
<div class="a" style="left:513px;top:682px;width:1px;height:6px;background:#e6e6e6"></div>
<div class="a" style="left:620px;top:682px;width:1px;height:6px;background:#e6e6e6"></div>
<div class="a" style="left:672px;top:682px;width:1px;height:6px;background:#e6e6e6"></div>
<div class="a" style="left:779px;top:682px;width:1px;height:6px;background:#e6e6e6"></div>
<div class="a" style="left:938px;top:682px;width:1px;height:6px;background:#e6e6e6"></div>
<div class="a" style="left:1051px;top:682px;width:1px;height:6px;background:#e6e6e6"></div>
<div class="a" style="left:1224px;top:682px;width:1px;height:6px;background:#e6e6e6"></div>
<svg class="a" style="left:55px;top:496px" width="16" height="13" viewBox="0 0 16 13"><path d="M1.5 6.5L5.5 10.5L14.5 1.5" fill="none" stroke="#3bb24a" stroke-width="2.2"/></svg>
<div class="c" style="left:76px;top:490px;color:#f4fbff">1</div>
<div class="c" style="left:104px;top:490px">True Position &lt;= .03 in</div>
<div class="c" style="left:306px;top:490px">1</div>
<div class="c" style="left:357px;top:490px">0.02 0.03</div>
<svg class="a" style="left:639px;top:494px" width="16" height="16" viewBox="0 0 16 16"><circle cx="8" cy="8" r="7.2" fill="#35b84a"/><path d="M4.3 8.2L6.9 10.6L11.6 5.6" fill="none" stroke="#fff" stroke-width="1.8"/></svg>
<svg class="a" style="left:55px;top:520px" width="16" height="13" viewBox="0 0 16 13"><path d="M1.5 6.5L5.5 10.5L14.5 1.5" fill="none" stroke="#3bb24a" stroke-width="2.2"/></svg>
<div class="c" style="left:76px;top:514px;color:#222">2</div>
<div class="c" style="left:104px;top:514px">Linear Dimension 9.000 +/- .010 in</div>
<div class="c" style="left:306px;top:514px">1</div>
<div class="c" style="left:357px;top:514px">9.001 9.002</div>
<svg class="a" style="left:639px;top:518px" width="16" height="16" viewBox="0 0 16 16"><circle cx="8" cy="8" r="7.2" fill="#35b84a"/><path d="M4.3 8.2L6.9 10.6L11.6 5.6" fill="none" stroke="#fff" stroke-width="1.8"/></svg>
<svg class="a" style="left:55px;top:544px" width="16" height="13" viewBox="0 0 16 13"><path d="M1.5 6.5L5.5 10.5L14.5 1.5" fill="none" stroke="#3bb24a" stroke-width="2.2"/></svg>
<div class="c" style="left:76px;top:538px;color:#222">3</div>
<div class="c" style="left:104px;top:538px">Linear Dimension 8.750 +/- .010 in</div>
<div class="c" style="left:306px;top:538px">1</div>
<div class="c" style="left:357px;top:538px">8.751 8.752</div>
<svg class="a" style="left:639px;top:542px" width="16" height="16" viewBox="0 0 16 16"><circle cx="8" cy="8" r="7.2" fill="#35b84a"/><path d="M4.3 8.2L6.9 10.6L11.6 5.6" fill="none" stroke="#fff" stroke-width="1.8"/></svg>
<svg class="a" style="left:55px;top:568px" width="16" height="13" viewBox="0 0 16 13"><path d="M1.5 6.5L5.5 10.5L14.5 1.5" fill="none" stroke="#3bb24a" stroke-width="2.2"/></svg>
<div class="c" style="left:76px;top:562px;color:#222">4</div>
<div class="c" style="left:104px;top:562px">Linear Dimension - Basic 8.008 in</div>
<div class="c" style="left:306px;top:562px">1</div>
<div class="c" style="left:357px;top:562px">8.008 8.008</div>
<svg class="a" style="left:639px;top:566px" width="16" height="16" viewBox="0 0 16 16"><circle cx="8" cy="8" r="7.2" fill="#35b84a"/><path d="M4.3 8.2L6.9 10.6L11.6 5.6" fill="none" stroke="#fff" stroke-width="1.8"/></svg>
<svg class="a" style="left:55px;top:592px" width="16" height="13" viewBox="0 0 16 13"><path d="M1.5 6.5L5.5 10.5L14.5 1.5" fill="none" stroke="#3bb24a" stroke-width="2.2"/></svg>
<div class="c" style="left:76px;top:586px;color:#222">5</div>
<div class="c" style="left:104px;top:586px">Linear Dimension - Basic 7.008 in</div>
<div class="c" style="left:306px;top:586px">1</div>
<div class="c" style="left:357px;top:586px">7.008 7.008</div>
<svg class="a" style="left:639px;top:590px" width="16" height="16" viewBox="0 0 16 16"><circle cx="8" cy="8" r="7.2" fill="#35b84a"/><path d="M4.3 8.2L6.9 10.6L11.6 5.6" fill="none" stroke="#fff" stroke-width="1.8"/></svg>
<svg class="a" style="left:55px;top:616px" width="16" height="13" viewBox="0 0 16 13"><path d="M1.5 6.5L5.5 10.5L14.5 1.5" fill="none" stroke="#3bb24a" stroke-width="2.2"/></svg>
<div class="c" style="left:76px;top:610px;color:#222">6</div>
<div class="c" style="left:104px;top:610px">Linear Dimension 6.070 +/- .010 in</div>
<div class="c" style="left:306px;top:610px">1</div>
<div class="c" style="left:357px;top:610px">6.079 6.073</div>
<svg class="a" style="left:639px;top:614px" width="16" height="16" viewBox="0 0 16 16"><rect x="1" y="1" width="14" height="14" rx="2" fill="#fbbd2e"/><path d="M8 4V9.5" stroke="#fff" stroke-width="1.8"/><circle cx="8" cy="12" r="1" fill="#fff"/></svg>
<div class="a" style="left:52px;top:688px;width:1313px;height:13px;background:#f0f0f0;border-top:1px solid #e0e0e0"></div>
<div class="a" style="left:63px;top:690px;width:926px;height:10px;border:1px solid #b5b5b5;border-radius:4px;background:linear-gradient(#f7f7f7,#e0e0e0)"></div>
<svg class="a" style="left:52px;top:688px" width="1313" height="13"><path d="M6.5 3L3.5 6.5L6.5 10M1306 3L1309 6.5L1306 10" fill="none" stroke="#888" stroke-width="1.1"/></svg>
<div class="a" style="left:1364px;top:472px;width:1px;height:229px;background:#1f9bd7"></div>
<div class="a" style="left:0;top:702px;width:1365px;height:34px;background:#f2f2f2"></div>
<div class="a" style="left:10px;top:705px;width:30px;height:31px;background:#6ab13e"></div>
<svg class="a" style="left:10px;top:705px" width="30" height="31" viewBox="0 0 30 31">
<path d="M11 7.5L3 15.5L11 23.5L19 15.5Z" fill="#fff" stroke="#111" stroke-width="1.3"/>
<path d="M18 7.5L10 15.5L18 23.5L26 15.5Z" fill="#2fae4a" stroke="#111" stroke-width="1.3"/>
</svg>
<div class="sn" style="left:50px;top:712.5px;letter-spacing:-0.8px">Results</div>
<svg class="a" style="left:131px;top:713px" width="16" height="13" viewBox="0 0 16 13"><g fill="#111"><rect x="0.5" y="1" width="2.5" height="2"/><rect x="0.5" y="5.5" width="2.5" height="2"/><rect x="0.5" y="10" width="2.5" height="2"/><rect x="5" y="1" width="10" height="2"/><rect x="5" y="5.5" width="10" height="2"/><rect x="5" y="10" width="10" height="2"/></g></svg>
<div class="sn" style="left:152px;top:713px">6</div>
<div class="sep" style="left:180px"></div>
<svg class="a" style="left:210px;top:712px" width="16" height="16" viewBox="0 0 16 16"><circle cx="8" cy="8" r="7.2" fill="#35b84a"/><path d="M4.3 8.2L6.9 10.6L11.6 5.6" fill="none" stroke="#fff" stroke-width="1.8"/></svg>
<div class="sn" style="left:231px;top:713px">5</div>
<div class="sep" style="left:259px"></div>
<svg class="a" style="left:298px;top:713px" width="14" height="14" viewBox="0 0 14 14"><rect x="0" y="0" width="14" height="14" rx="2" fill="#fbbd2e"/><path d="M7 3V8.5" stroke="#fff" stroke-width="1.8"/><circle cx="7" cy="11" r="1" fill="#fff"/></svg>
<div class="sn" style="left:318px;top:713px">1</div>
<div class="sep" style="left:346px"></div>
<svg class="a" style="left:376px;top:712px" width="16" height="16" viewBox="0 0 16 16"><path d="M8 0.5L14.5 4.2V11.8L8 15.5L1.5 11.8V4.2Z" fill="#e0242b"/><path d="M5.5 5.5L10.5 10.5M10.5 5.5L5.5 10.5" stroke="#fff" stroke-width="1.8"/></svg>
<div class="sn" style="left:397px;top:713px">0</div>
<div class="sep" style="left:425px"></div>
<svg class="a" style="left:455px;top:712px" width="16" height="16" viewBox="0 0 16 16"><circle cx="8" cy="8" r="7.2" fill="#f28a12"/><rect x="4" y="7" width="8" height="2.2" fill="#fff"/></svg>
<div class="sn" style="left:476px;top:713px">0</div>
<div class="sep" style="left:504px"></div>
<svg class="a" style="left:575px;top:712px" width="16" height="16" viewBox="0 0 16 16"><circle cx="8" cy="8" r="7.2" fill="#b3b3b3"/></svg>
<div class="sn" style="left:596px;top:713px">0</div>
<div class="sep" style="left:624px"></div>
<svg class="a" style="left:681px;top:712px" width="17" height="17" viewBox="0 0 17 17"><g fill="none" stroke="#2a8ee0" stroke-width="1.8"><path d="M4 13A6.5 6.5 0 1 1 12.5 13.5"/><path d="M6 10A3 3 0 1 1 10 10"/><path d="M8.5 8.5L2.5 15M2.5 11V15H6.5"/></g></svg>
<div class="sn" style="left:704px;top:713px">1</div>
<div class="sep" style="left:740px"></div>
<div class="t" style="left:790px;top:715px;font-size:12.5px;color:#222">Group:</div>
<div class="dd" style="left:831px;width:99px">Default</div>
<div class="sep" style="left:944px;top:708px;height:24px"></div>
<div class="t" style="left:993px;top:715px;font-size:12.5px;color:#222">Filter:</div>
<div class="dd" style="left:1027px;width:100px">All</div>
<div class="sep" style="left:1142px;top:708px;height:24px"></div>
<div class="t" style="left:1188px;top:715px;font-size:12.5px;color:#222">Profile:</div>
<div class="dd" style="left:1230px;width:99px">Default</div>
<svg class="a" style="left:1338px;top:714px" width="13" height="11" viewBox="0 0 13 11"><path d="M1 1L5 5.5L1 10M7 1L11 5.5L7 10" fill="none" stroke="#222" stroke-width="1.4"/></svg>

<div class="a" style="left:319px;top:48px;width:221px;height:201px;box-shadow:1px 4px 9px rgba(0,0,0,0.3)"></div>
<div class="a" style="left:319px;top:48px;width:221px;height:201px;background:#fff;border:1px solid #bdbdbd;border-right-color:#a0a0a0;border-bottom-color:#a0a0a0;border-top:none"></div>
<div class="msep" style="top:81px"></div>
<div class="msep" style="top:112px"></div>
<div class="msep" style="top:140px"></div>
<div class="msep" style="top:193px"></div>
<svg class="a" style="left:320px;top:52px" width="50" height="90" viewBox="320 52 50 90">
<g fill="none" stroke="#1a1a1a" stroke-width="1.1">
<path d="M344.5 58.5H352.5L355.8 62V73.3H344.5Z"/><path d="M352 58.5V62.5H355.8"/><path d="M346.5 61H350.5M346.5 63.3H351"/>
<path d="M342 91.5H350.5M355 97.5V104.5H341.5V91.5"/>
<path d="M345.5 102.2L346.5 98.5L355.5 89.5Q356.8 88.5 357.8 89.5L358.5 90.2Q359.3 91.2 358.3 92.3L349.3 101.2Z"/><path d="M354 91L357 94"/>
</g>
<text x="350.2" y="71.3" font-size="8" font-weight="bold" fill="#1a1a1a" text-anchor="middle" font-family="Liberation Sans">$</text>
<path d="M326.5 125.5L330.5 131L335.5 122.5" fill="none" stroke="#cdcdcd" stroke-width="1.7"/>
</svg>
<div class="ml" style="top:61px">Orders/Reports...</div>
<div class="ml" style="top:92px">Characteristic Results Entry...</div>
<div class="ml" style="top:121px">CMM Report Panel</div>
<div class="ml" style="top:149px">Import XML Results...</div>
<div class="ml" style="top:174px">Import Results from Excel...</div>
<div class="ml" style="top:202px">Results Entry Settings...</div>
<div class="ml" style="top:227px">Configure Custom Fields...</div>

</body></html>
